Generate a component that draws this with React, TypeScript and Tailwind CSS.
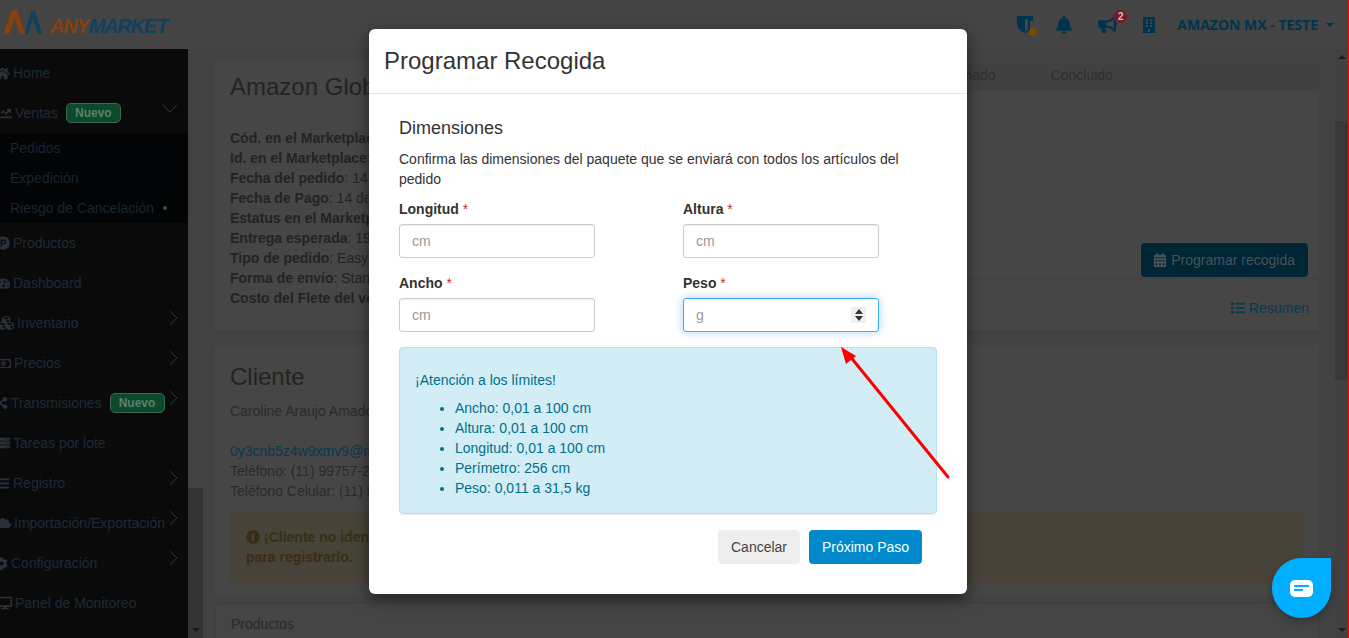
import type { ReactNode } from 'react'
import {
  FaBars,
  FaBell,
  FaBuilding,
  FaBullhorn,
  FaCalendarAlt,
  FaChartLine,
  FaCloud,
  FaCog,
  FaCubes,
  FaDesktop,
  FaExclamationCircle,
  FaHome,
  FaList,
  FaProductHunt,
  FaRegMoneyBillAlt,
  FaServer,
  FaShareAlt,
  FaTachometerAlt,
} from 'react-icons/fa'

interface NavItem {
  label: string
  icon: ReactNode
  iconBox: string
  badge?: boolean
  arrow?: boolean
}

const TOP_ITEMS: NavItem[] = [{ label: 'Home', icon: <FaHome size={15} />, iconBox: 'w-[13px]' }]

const BOTTOM_ITEMS: NavItem[] = [
  { label: 'Productos', icon: <FaProductHunt size={14} />, iconBox: 'w-[13px]' },
  { label: 'Dashboard', icon: <FaTachometerAlt size={13} />, iconBox: 'w-[13px]' },
  { label: 'Inventario', icon: <FaCubes size={16} />, iconBox: 'w-[17px]', arrow: true },
  { label: 'Precios', icon: <FaRegMoneyBillAlt size={15} />, iconBox: 'w-[14px]', arrow: true },
  { label: 'Transmisiones', icon: <FaShareAlt size={12} />, iconBox: 'w-[11px]', badge: true, arrow: true },
  { label: 'Tareas por lote', icon: <FaServer size={12} />, iconBox: 'w-[13px]' },
  { label: 'Registro', icon: <FaBars size={13} />, iconBox: 'w-[13px]', arrow: true },
  { label: 'Importación/Exportación', icon: <FaCloud size={14} />, iconBox: 'w-[14px]', arrow: true },
  { label: 'Configuración', icon: <FaCog size={13} />, iconBox: 'w-[11px]', arrow: true },
  { label: 'Panel de Monitoreo', icon: <FaDesktop size={14} />, iconBox: 'w-[15px]' },
]

// Only what shows left of the modal is written out
const ORDER_ROWS = [
  ['Cód. en el Marketplace', ''],
  ['Id. en el Marketplace:', ''],
  ['Fecha del pedido', ': 14'],
  ['Fecha de Pago', ': 14 de'],
  ['Estatus en el Marketplace', ''],
  ['Entrega esperada', ': 19'],
  ['Tipo de pedido', ': Easy'],
  ['Forma de envío', ': Stan'],
  ['Costo del Flete del ve', ''],
]

const LIMITS = [
  'Ancho: 0,01 a 100 cm',
  'Altura: 0,01 a 100 cm',
  'Longitud: 0,01 a 100 cm',
  'Perímetro: 256 cm',
  'Peso: 0,011 a 31,5 kg',
]

function Chevron({ down }: { down?: boolean }) {
  return (
    <svg
      width={down ? 16 : 9}
      height={down ? 9 : 16}
      viewBox={down ? '0 0 16 9' : '0 0 9 16'}
      fill="none"
      stroke="#2a3540"
      strokeWidth="1"
      className="mb-[10px] shrink-0"
    >
      <path d={down ? 'M1 1l7 7 7-7' : 'M1 1l7 7-7 7'} />
    </svg>
  )
}

function NuevoBadge({ className }: { className: string }) {
  return (
    <span
      className={`flex h-5 w-[55px] shrink-0 items-center justify-center rounded-[5px] border border-[#3f6650] bg-[#0b4a2a] text-xs font-bold text-[#5f7f6e] ${className}`}
    >
      Nuevo
    </span>
  )
}

function SideRow({ item }: { item: NavItem }) {
  return (
    <div className="flex h-10 items-center whitespace-nowrap pr-[10px] text-sm text-[#1e2a36]">
      <span className={`flex shrink-0 justify-end pr-[3px] text-[#2a3138] ${item.iconBox}`}>
        <span className="shrink-0">{item.icon}</span>
      </span>
      <span>{item.label}</span>
      {item.badge && <NuevoBadge className="ml-2" />}
      {item.arrow && (
        <span className="ml-auto">
          <Chevron />
        </span>
      )}
    </div>
  )
}

function Scrollbar({ thumb }: { thumb: ReactNode }) {
  return (
    <div className="flex shrink-0 flex-col items-center bg-[#414141]">
      <span className="mt-[6px] h-0 w-0 border-x-4 border-b-4 border-x-transparent border-b-[#1c1c1c]" />
      {thumb}
      <span className="mb-[6px] mt-auto h-0 w-0 border-x-4 border-t-4 border-x-transparent border-t-[#1c1c1c]" />
    </div>
  )
}

function Field({ label, placeholder, focused }: { label: string; placeholder: string; focused?: boolean }) {
  return (
    <div>
      <label className="block h-5 text-sm font-bold leading-5 text-[#333]">
        {label} <span className="font-normal text-[#c9302c]">*</span>
      </label>
      <div className="relative mt-[5px] w-[196px]">
        <input
          readOnly
          placeholder={placeholder}
          className={
            focused
              ? 'h-[34px] w-full rounded-[3px] border border-[#39aef0] bg-white px-3 text-sm shadow-[0_0_8px_rgba(102,175,233,0.6)] outline-none placeholder:text-[#999]'
              : 'h-[34px] w-full rounded-[3px] border border-[#ccc] bg-white px-3 text-sm shadow-[inset_0_1px_1px_rgba(0,0,0,0.075)] outline-none placeholder:text-[#999]'
          }
        />
        {focused && (
          <span className="absolute right-[13px] top-[9px] flex h-4 w-[15px] flex-col items-center justify-center gap-[2px] bg-[#efefef]">
            <span className="h-0 w-0 border-x-[4px] border-b-[5px] border-x-transparent border-b-[#333]" />
            <span className="h-0 w-0 border-x-[4px] border-t-[5px] border-x-transparent border-t-[#333]" />
          </span>
        )}
      </div>
    </div>
  )
}

export default function App() {
  return (
    <div className="relative flex h-[638px] flex-col overflow-hidden border-r border-[#ff0000] bg-[#424242] font-['Liberation_Sans',Arial,sans-serif] text-sm text-[#232323]">
      {/* Top bar */}
      <header className="flex h-[49px] shrink-0 items-center bg-[#444444] pl-[3px] pr-[14px]">
        <svg width="39" height="24" viewBox="0 0 39 24" className="mb-[5px]">
          <path d="M0 24L9 0h5l8 24h-5L11.5 8 6 24z" fill="#8a3f0f" />
          <path d="M22 24l6.5-23H32l7 23h-4L30 8l-5 16z" fill="#0e4160" />
        </svg>
        <span className="ml-2 mt-[3px] text-[20px] font-bold italic tracking-[-1.2px] text-[#8a3f0f]">
          ANY<span className="text-[#0e4160]">MARKET</span>
        </span>
        <div className="ml-auto flex items-center text-[#00344e]">
          <span className="relative">
            <svg width="19" height="20" viewBox="0 0 19 20">
              <path d="M1 1h16v5h-3v9l-4 3q-9-2-9-10z" fill="#00344e" />
              <path d="M9 4h3v11l-3 2z" fill="#444444" />
            </svg>
            <span className="absolute -bottom-px -right-[2px] h-2 w-2 rounded-full bg-[#7a4a00]" />
          </span>
          <FaBell size={18} className="ml-[20px]" />
          <FaBullhorn size={19} className="ml-[25px]" />
          <span className="relative -top-[8px] -ml-[3px] flex h-[13px] w-[13px] items-center justify-center rounded-full bg-[#7a1a22] text-[10px] font-bold leading-none text-[#c4c4c4]">
            2
          </span>
          <FaBuilding size={16} className="ml-[14px]" />
          <span className="ml-[20px] font-['Open_Sans',sans-serif] text-sm font-bold">AMAZON MX - TESTE</span>
          <span className="ml-[8px] h-0 w-0 border-x-4 border-t-4 border-x-transparent border-t-[#00344e]" />
        </div>
      </header>

      <div className="flex min-h-0 flex-1">
        {/* Sidebar */}
        <aside className="w-[188px] shrink-0 overflow-hidden bg-[#0a0a0a] pt-1">
          {TOP_ITEMS.map((item) => (
            <SideRow key={item.label} item={item} />
          ))}
          <div className="flex h-10 items-center whitespace-nowrap pr-[10px] text-[#1e2a36]">
            <span className="flex w-[15px] shrink-0 justify-end pr-[3px] text-[#2a3138]">
              <span className="shrink-0">
                <FaChartLine size={14} />
              </span>
            </span>
            <span>Ventas</span>
            <NuevoBadge className="ml-2" />
            <span className="ml-auto">
              <Chevron down />
            </span>
          </div>
          <div className="bg-[#030406] pl-[10px] text-[#1a2530]">
            <div className="flex h-[30px] items-center">Pedidos</div>
            <div className="flex h-[30px] items-center">Expedición</div>
            <div className="flex h-[30px] items-center">
              Riesgo de Cancelación
              <span className="ml-[9px] h-1 w-1 rounded-full bg-[#2a5c40]" />
            </div>
          </div>
          {BOTTOM_ITEMS.map((item) => (
            <SideRow key={item.label} item={item} />
          ))}
        </aside>

        <div className="flex w-[15px] shrink-0 flex-col">
          <div className="h-[439px] bg-[#424242]" />
          <div className="flex flex-1 items-end justify-center bg-[#333333] pb-[6px]">
            <span className="h-0 w-0 border-x-4 border-t-4 border-x-transparent border-t-[#1c1c1c]" />
          </div>
        </div>

        {/* Page behind the modal */}
        <main className="min-w-0 flex-1 overflow-hidden pl-3 pr-4 pt-[10px]">
          <section className="flex h-[271px] bg-[#464646]">
            <div className="w-[505px] shrink-0 whitespace-nowrap px-[15px] pt-[15px]">
              <h2 className="text-2xl leading-[26px]">Amazon Global</h2>
              <div className="mt-[28px] leading-5">
                {ORDER_ROWS.map(([name, value]) => (
                  <div key={name}>
                    <b>{name}</b>
                    {value}
                  </div>
                ))}
              </div>
            </div>
            <div className="min-w-0 flex-1">
              <div className="flex h-8 items-center gap-[55px] bg-[#414141] pl-[225px] text-[#2e2e2e]">
                <span>Enviado</span>
                <span>Concluido</span>
              </div>
              <div className="mt-[152px] flex justify-end border-b border-[#404040] pb-px pr-[11px]">
                <button className="flex h-[34px] items-center gap-1 rounded-[4px] bg-[#002535] pl-3 pr-[13px] text-[#46535a]">
                  <FaCalendarAlt size={14} />
                  Programar recogida
                </button>
              </div>
              <div className="mt-[19px] flex items-center justify-end gap-1 pr-[10px] text-[#07394c]">
                <FaList size={14} />
                Resumen
              </div>
            </div>
          </section>

          <section className="mt-[15px] h-[251px] whitespace-nowrap bg-[#464646] px-[15px] pt-[19px]">
            <h2 className="text-2xl leading-[26px]">Cliente</h2>
            <p className="mt-[11px] leading-5 text-[#2a2a2a]">Caroline Araujo Amado</p>
            <p className="mt-5 leading-5 text-[#07394c]">0y3cnb5z4w9xmv9@m</p>
            <p className="leading-5 text-[#2a2a2a]">Teléfono: (11) 99757-2</p>
            <p className="leading-5 text-[#2a2a2a]">Teléfono Celular: (11) 9</p>
            <div className="mt-[10px] h-[72px] rounded-[4px] bg-[#474339] px-4 py-[16px] font-bold leading-5 text-[#3a2d16]">
              <FaExclamationCircle size={14} className="mr-1 inline -translate-y-px" />
              ¡Cliente no iden
              <br />
              para registrarlo.
            </div>
          </section>

          <section className="mt-[7px] h-10 rounded-t-[4px] border border-[#3d3d3d] bg-[#454545] px-[15px] pt-[10px] leading-5 text-[#2a2a2a]">
            Productos
          </section>
        </main>

        <Scrollbar thumb={<div className="mt-[62px] h-[259px] w-full min-w-[13px] bg-[#383838]" />} />
      </div>

      {/* Chat launcher */}
      <div className="absolute left-[1272px] top-[558px] flex h-[60px] w-[59px] items-center justify-center rounded-full rounded-tr-md bg-[#00aeff] shadow-[0_4px_10px_rgba(0,0,0,0.25)]">
        <span className="flex h-[17px] w-[23px] flex-col justify-center gap-[2px] rounded-[5px] bg-white pl-[4px]">
          <span className="h-[2px] w-[15px] bg-[#00aeff]" />
          <span className="h-[2px] w-[9px] bg-[#00aeff]" />
        </span>
      </div>

      {/* Modal */}
      <div className="absolute left-[369px] top-[29px] w-[598px] rounded-[6px] bg-white text-[#333] shadow-[0_5px_15px_rgba(0,0,0,0.5)]">
        <div className="flex h-[65px] items-center border-b border-[#e5e5e5] px-[15px] text-2xl">Programar Recogida</div>
        <div className="px-[30px] pb-[30px] pt-6">
          <h3 className="text-lg leading-5">Dimensiones</h3>
          <p className="mt-[11px] leading-5">
            Confirma las dimensiones del paquete que se enviará con todos los artículos del pedido
          </p>
          <div className="mt-[10px] grid grid-cols-[284px_1fr] gap-y-[15px]">
            <Field label="Longitud" placeholder="cm" />
            <Field label="Altura" placeholder="cm" />
            <Field label="Ancho" placeholder="cm" />
            <Field label="Peso" placeholder="g" focused />
          </div>
          <div className="mt-[15px] rounded-[4px] border border-[#b0e2f0] bg-[#d3edf6] px-[15px] pb-[15px] pt-[22px] leading-5 text-[#00708c]">
            <p>¡Atención a los límites!</p>
            <ul className="mt-2 list-disc pl-10">
              {LIMITS.map((limit) => (
                <li key={limit}>{limit}</li>
              ))}
            </ul>
          </div>
          <div className="flex justify-end gap-[9px] border-t border-[#eeeeee] pr-[15px] pt-[15px]">
            <button className="h-[34px] w-[82px] rounded-[4px] bg-[#eeeeee] text-[#444]">Cancelar</button>
            <button className="h-[34px] w-[113px] rounded-[4px] bg-[#008acb] text-white">Próximo Paso</button>
          </div>
        </div>
      </div>

      {/* Red annotation arrow */}
      <svg className="absolute left-[835px] top-[340px]" width="120" height="145" viewBox="0 0 120 145" fill="none">
        <path d="M113 137L14 15" stroke="#ff0000" strokeWidth="3" strokeLinecap="round" />
        <path d="M6 7l15 9-10 8z" fill="#ff0000" />
      </svg>
    </div>
  )
}
